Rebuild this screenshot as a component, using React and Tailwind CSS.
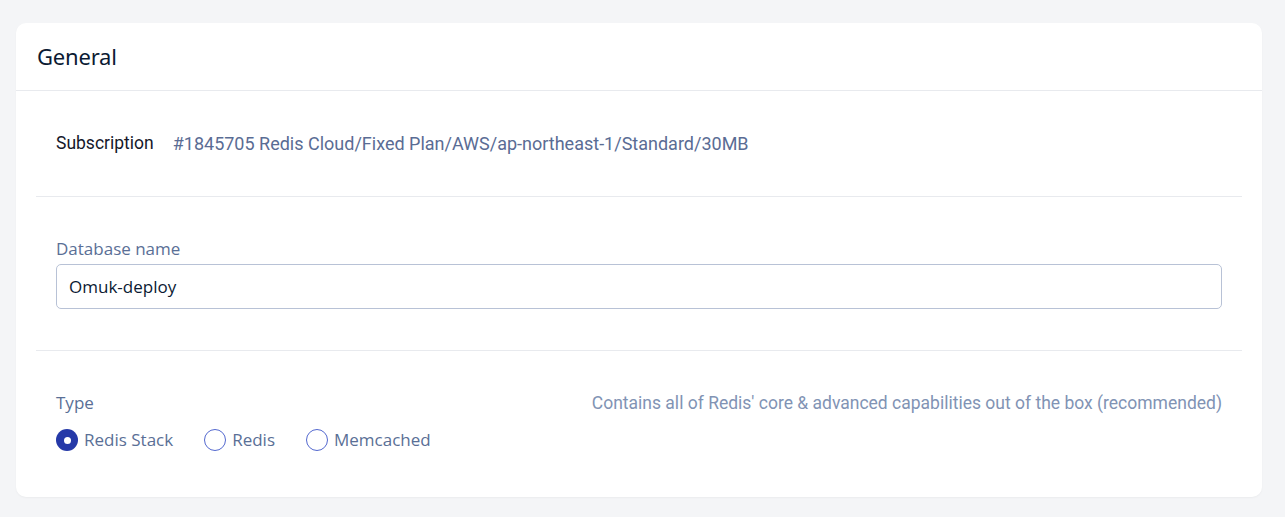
import React, { useState } from "react";

const types = ["Redis Stack", "Redis", "Memcached"];

const Radio = ({ checked }) => (
  <span
    className={`w-[22px] h-[22px] rounded-full shrink-0 flex items-center justify-center ${
      checked ? "bg-[#2539a8]" : "border border-[#5368cf] bg-white"
    }`}
  >
    {checked ? <span className="w-[7px] h-[7px] rounded-full bg-white" /> : null}
  </span>
);

const App = () => {
  const [type, setType] = useState("Redis Stack");
  const [name, setName] = useState("Omuk-deploy");

  return (
    <div className="min-h-screen bg-[#f4f5f7] pl-4 pr-[23px] pt-[23px] pb-5 font-['Open_Sans',sans-serif]">
      <div className="bg-white rounded-[10px] shadow-[0_1px_2px_rgba(0,0,0,0.04)]">
        <div className="h-[68px] px-[21px] flex items-center border-b border-[#e8eaee]">
          <h2 className="text-[22px] text-[#0b1a33] font-['Noto_Sans',sans-serif] tracking-[-0.2px]">
            General
          </h2>
        </div>

        <div className="px-5">
          <div className="h-[106px] px-5 flex items-center gap-[19px] border-b border-[#e8eaee] font-['Roboto',sans-serif]">
            <span className="text-[17.5px] text-[#15182a]">Subscription</span>
            <span className="text-[18px] text-[#5a6c94]">
              #1845705 Redis Cloud/Fixed Plan/AWS/ap-northeast-1/Standard/30MB
            </span>
          </div>

          <div className="px-5 pt-[40px] pb-[41px] border-b border-[#e8eaee]">
            <label className="block text-[17px] text-[#5a6f96] leading-[24px] mb-[3px]">
              Database name
            </label>
            <input
              value={name}
              onChange={(e) => setName(e.target.value)}
              className="w-full h-[45px] rounded-[5px] border border-[#b8c2d6] px-3 text-[17px] text-[#0b1a33] outline-none"
            />
          </div>

          <div className="px-5 pt-[40px] pb-[45px]">
            <div className="flex items-center justify-between leading-[24px]">
              <span className="text-[17px] text-[#5a6f96]">Type</span>
              <span className="text-[17.5px] text-[#8193b4] font-['Roboto',sans-serif]">
                Contains all of Redis' core &amp; advanced capabilities out of the box (recommended)
              </span>
            </div>
            <div className="flex items-center gap-[31px] mt-[13px]">
              {types.map((t) => (
                <button
                  key={t}
                  type="button"
                  onClick={() => setType(t)}
                  className="flex items-center gap-[6px] text-[17px] text-[#5a6f96] leading-[24px]"
                >
                  <Radio checked={type === t} />
                  {t}
                </button>
              ))}
            </div>
          </div>
        </div>
      </div>
    </div>
  );
};

export default App;
